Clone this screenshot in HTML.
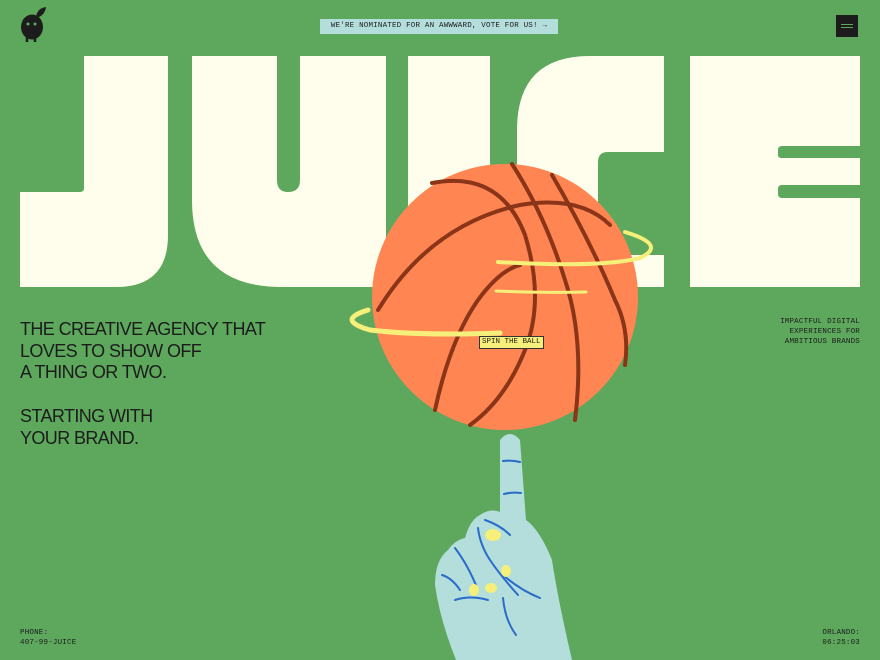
<!DOCTYPE html>
<html><head><meta charset="utf-8"><style>
html,body{margin:0;padding:0;}
body{width:880px;height:660px;background:#5da85d;position:relative;overflow:hidden;font-family:"Liberation Sans",sans-serif;color:#1c1c1c;}
.mono{font-family:"Liberation Mono",monospace;font-size:7.5px;letter-spacing:0.2px;line-height:10px;}
#banner{position:absolute;left:320px;top:19px;width:238px;height:15px;background:#b3dedb;text-align:center;line-height:15px;}
#menu{position:absolute;left:836px;top:15px;width:22px;height:22px;background:#1c1c1c;}
#menu i{position:absolute;left:5px;width:12px;height:1px;background:#5da85d;}
#tag{position:absolute;left:20px;top:319px;font-size:18px;line-height:21.7px;letter-spacing:-0.6px;}
#right{position:absolute;right:20px;top:317px;text-align:right;}
#phone{position:absolute;left:20px;top:628px;}
#city{position:absolute;right:20px;top:628px;text-align:right;}
svg{position:absolute;left:0;top:0;}
#spin{position:absolute;left:479px;top:336px;background:#f6ef7a;border:1px solid #333;font-family:"Liberation Mono",monospace;font-size:7.5px;padding:1px 2px;line-height:9px;}
</style></head><body>
<svg width="880" height="660" viewBox="0 0 880 660">
<g fill="#fffeec">
<path d="M84 56H168V235Q168 287 116 287H20V192H80Q84 192 84 188Z"/>
<path d="M192 56H277V180Q277 192 288 192Q300 192 300 180V56H386V287H282Q192 287 192 200Z"/>
<path d="M408 56H490V287H408Z"/>
<path d="M517 130Q517 56 590 56H664V152H608Q598 152 598 162V248Q598 255 606 255H664V287H517Z"/>
<path d="M690 56H860V146H782Q778 146 778 150V155Q778 158 782 158H860V185H782Q778 185 778 189V194Q778 198 782 198H860V287H690Z"/>
</g>
<circle cx="505" cy="297" r="133" fill="#ff8553"/>
<g fill="none" stroke="#8a3418" stroke-width="4" stroke-linecap="round">
<path d="M432 183Q500 170 525 235Q545 300 525 350Q505 400 470 425"/>
<path d="M512 164Q545 215 565 280Q585 340 575 420"/>
<path d="M552 175Q590 240 615 300Q630 330 625 365"/>
<path d="M378 310Q430 225 520 205Q580 195 610 225"/>
<path d="M435 410Q450 340 478 300Q500 270 520 265"/>
</g>
<g fill="none" stroke="#f6ef7a" stroke-linecap="round">
<path d="M625 232Q668 245 640 258Q600 268 498 262" stroke-width="4"/>
<path d="M496 291Q540 293 586 292" stroke-width="3"/>
<path d="M368 310Q335 320 370 330Q420 336 500 333" stroke-width="5"/>
</g>
<path d="M500 440Q510 428 520 440L526 520Q540 530 552 560Q558 600 572 660H456Q440 620 435 585Q435 560 448 550Q455 540 465 538Q470 520 480 515Q490 508 500 512Z" fill="#b3dedb"/>
<g fill="none" stroke="#2a6acb" stroke-width="2" stroke-linecap="round">
<path d="M503 461Q512 460 520 462"/><path d="M504 494Q512 492 521 493"/>
<path d="M478 528Q480 545 490 560Q500 575 518 595"/>
<path d="M485 520Q500 525 510 535"/>
<path d="M455 548Q468 565 478 590"/><path d="M442 575Q452 578 460 590"/>
<path d="M503 575Q520 590 540 598"/><path d="M503 598Q505 620 516 635"/>
<path d="M488 600Q470 595 455 600"/>
</g>
<g fill="#f6ef7a"><ellipse cx="493" cy="535" rx="8" ry="6"/><ellipse cx="506" cy="571" rx="5" ry="6"/><ellipse cx="474" cy="590" rx="5" ry="6"/><ellipse cx="491" cy="588" rx="6" ry="5"/></g>
<ellipse cx="32" cy="27" rx="11" ry="12.5" fill="#1c1c1c"/>
<path d="M36 16Q38 8 46 7Q45 15 37 18Z" fill="#1c1c1c"/>
<path d="M27 37V42M35 37V42" stroke="#1c1c1c" stroke-width="2.5"/>
<circle cx="28" cy="24" r="1.5" fill="#5da85d"/><circle cx="35" cy="24" r="1.5" fill="#5da85d"/>
</svg>
<div id="banner" class="mono">WE'RE NOMINATED FOR AN AWWWARD, VOTE FOR US! →</div>
<div id="menu"><i style="top:9px"></i><i style="top:12px"></i></div>
<div id="tag">THE CREATIVE AGENCY THAT<br>LOVES TO SHOW OFF<br>A THING OR TWO.<br><br>STARTING WITH<br>YOUR BRAND.</div>
<div id="right" class="mono">IMPACTFUL DIGITAL<br>EXPERIENCES FOR<br>AMBITIOUS BRANDS</div>
<div id="spin">SPIN THE BALL</div>
<div id="phone" class="mono">PHONE:<br>407-99-JUICE</div>
<div id="city" class="mono">ORLANDO:<br>06:25:03</div>
</body></html>
